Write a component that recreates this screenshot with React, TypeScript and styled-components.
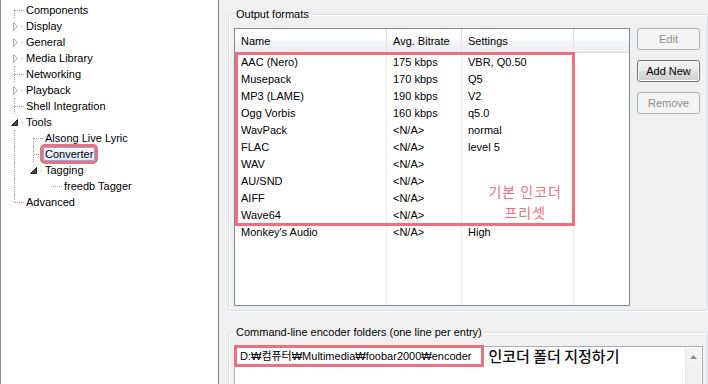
import styled, { createGlobalStyle } from "styled-components";

const GlobalStyle = createGlobalStyle`
  html, body {
    margin: 0;
    padding: 0;
  }
  body {
    font-family: "Liberation Sans", "Noto Sans CJK KR", sans-serif;
    font-size: 11px;
    color: #000;
    background: #f0f0f0;
  }
  * {
    box-sizing: border-box;
  }
`;

type TreeItem = {
  label: string;
  guides: boolean[];
  expander?: "open" | "closed";
  first?: boolean;
  last?: boolean;
  selected?: boolean;
};

const tree: TreeItem[] = [
  { label: "Components", guides: [], first: true },
  { label: "Display", guides: [], expander: "closed" },
  { label: "General", guides: [], expander: "closed" },
  { label: "Media Library", guides: [], expander: "closed" },
  { label: "Networking", guides: [] },
  { label: "Playback", guides: [], expander: "closed" },
  { label: "Shell Integration", guides: [] },
  { label: "Tools", guides: [], expander: "open" },
  { label: "Alsong Live Lyric", guides: [true], first: true },
  { label: "Converter", guides: [true], selected: true },
  { label: "Tagging", guides: [true], expander: "open", last: true },
  { label: "freedb Tagger", guides: [true, false], first: true, last: true },
  { label: "Advanced", guides: [], last: true },
];

type Format = { name: string; bitrate: string; settings: string };

const formats: Format[] = [
  { name: "AAC (Nero)", bitrate: "175 kbps", settings: "VBR, Q0.50" },
  { name: "Musepack", bitrate: "170 kbps", settings: "Q5" },
  { name: "MP3 (LAME)", bitrate: "190 kbps", settings: "V2" },
  { name: "Ogg Vorbis", bitrate: "160 kbps", settings: "q5.0" },
  { name: "WavPack", bitrate: "<N/A>", settings: "normal" },
  { name: "FLAC", bitrate: "<N/A>", settings: "level 5" },
  { name: "WAV", bitrate: "<N/A>", settings: "" },
  { name: "AU/SND", bitrate: "<N/A>", settings: "" },
  { name: "AIFF", bitrate: "<N/A>", settings: "" },
  { name: "Wave64", bitrate: "<N/A>", settings: "" },
  { name: "Monkey's Audio", bitrate: "<N/A>", settings: "High" },
];

const columns = [
  { title: "Name", width: 152 },
  { title: "Avg. Bitrate", width: 75 },
  { title: "Settings", width: 112 },
];

const Expander = ({ open }: { open: boolean }) => (
  <svg width="19" height="16" viewBox="0 0 19 16">
    {open ? (
      <path d="M12.5 5.5 L12.5 11.5 L6.5 11.5 Z" fill="#4a4a4a" stroke="#262626" />
    ) : (
      <path d="M8.5 4.5 L8.5 12.5 L12.5 8.5 Z" fill="#fff" stroke="#a6a6a6" />
    )}
  </svg>
);

const TreeView = () => (
  <TreePanel>
    {tree.map((item) => (
      <TreeRow key={item.label}>
        {item.guides.map((line, i) => (
          <Guide key={i} $line={line} />
        ))}
        <Connector
          $from={item.first ? 8 : 0}
          $to={item.last ? 8 : 16}
          $branch={!!item.expander}
        >
          {item.expander && <Expander open={item.expander === "open"} />}
        </Connector>
        <TreeLabel $selected={item.selected}>{item.label}</TreeLabel>
      </TreeRow>
    ))}
  </TreePanel>
);

const App = () => {
  return (
    <Root>
      <GlobalStyle />
      <TreeView />
      <Content>
        <Group>
          <Legend>Output formats</Legend>
          <GroupBody>
            <ListView>
              <Header>
                {columns.map((c) => (
                  <HeaderCell key={c.title} style={{ width: c.width }}>
                    {c.title}
                  </HeaderCell>
                ))}
                <HeaderFiller />
              </Header>
              <ListBody>
                {formats.map((f) => (
                  <Row key={f.name}>
                    <Cell style={{ width: columns[0].width }}>{f.name}</Cell>
                    <Cell style={{ width: columns[1].width }}>{f.bitrate}</Cell>
                    <Cell style={{ width: columns[2].width }}>{f.settings}</Cell>
                  </Row>
                ))}
              </ListBody>
              <PresetMark>
                <PresetNote>
                  기본 인코더
                  <br />
                  프리셋
                </PresetNote>
              </PresetMark>
            </ListView>
            <Buttons>
              <Button disabled>Edit</Button>
              <Button>Add New</Button>
              <Button disabled>Remove</Button>
            </Buttons>
          </GroupBody>
        </Group>
        <Group $gap>
          <Legend>Command-line encoder folders (one line per entry)</Legend>
          <FolderBox>
            <FolderLine>
              <PathMark>D:₩컴퓨터₩Multimedia₩foobar2000₩encoder</PathMark>
              <FolderNote>인코더 폴더 지정하기</FolderNote>
            </FolderLine>
            <ScrollBar>
              <ScrollUp>
                <svg width="7" height="4" viewBox="0 0 7 4">
                  <path d="M0 4 L3.5 0 L7 4 Z" fill="#8a8a8a" />
                </svg>
              </ScrollUp>
            </ScrollBar>
          </FolderBox>
        </Group>
      </Content>
    </Root>
  );
};

const Root = styled.div`
  display: flex;
  width: 708px;
  height: 384px;
  overflow: hidden;
  background: #f0f0f0;
`;

const TreePanel = styled.div`
  flex: none;
  width: 219px;
  height: 100%;
  background: #fff;
  border-left: 1px solid #828790;
  border-right: 1px solid #828790;
  padding: 2px 0 0 4px;
`;

const TreeRow = styled.div`
  display: flex;
  align-items: center;
  height: 16px;
`;

const Guide = styled.span<{ $line: boolean }>`
  position: relative;
  flex: none;
  width: 19px;
  height: 16px;
  &::before {
    content: "";
    display: ${(p) => (p.$line ? "block" : "none")};
    position: absolute;
    left: 9px;
    top: 0;
    bottom: 0;
    border-left: 1px dotted #a0a0a0;
  }
`;

const Connector = styled.span<{ $from: number; $to: number; $branch: boolean }>`
  position: relative;
  flex: none;
  display: flex;
  width: 19px;
  height: 16px;
  &::before {
    content: "";
    display: ${(p) => (p.$branch ? "none" : "block")};
    position: absolute;
    left: 9px;
    top: ${(p) => p.$from}px;
    height: ${(p) => p.$to - p.$from}px;
    border-left: 1px dotted #a0a0a0;
  }
  &::after {
    content: "";
    position: absolute;
    top: 8px;
    left: ${(p) => (p.$branch ? 17 : 10)}px;
    width: ${(p) => (p.$branch ? 1 : 9)}px;
    border-top: 1px dotted #a0a0a0;
  }
`;

const TreeLabel = styled.span<{ $selected?: boolean }>`
  padding: 0 1px;
  height: 14px;
  line-height: 12px;
  border: 1px solid ${(p) => (p.$selected ? "#84acdd" : "transparent")};
  border-radius: 2px;
  white-space: nowrap;
  background: ${(p) =>
    p.$selected ? "linear-gradient(#f2f8fe, #dcebfc)" : "transparent"};
  outline: ${(p) => (p.$selected ? "3px solid #ee6f7d" : "none")};
  outline-offset: 0;
`;

const Content = styled.div`
  flex: 1;
  display: flex;
  flex-direction: column;
  padding: 8px 0 0 9px;
`;

const Group = styled.fieldset<{ $gap?: boolean }>`
  margin: ${(p) => (p.$gap ? "15px 0 0" : "0")};
  padding: 8px 4px 4px 5px;
  min-width: 0;
  border: 1px solid #d5dfe5;
  border-radius: 3px;
  box-shadow: inset 1px 1px 0 #fff, 1px 1px 0 #fff;
`;

const Legend = styled.legend`
  padding: 0 2px;
  line-height: 12px;
  color: #000;
`;

const GroupBody = styled.div`
  display: flex;
  gap: 7px;
`;

const ListView = styled.div`
  position: relative;
  width: 396px;
  height: 278px;
  background: #fff;
  border: 1px solid #828790;
`;

const Header = styled.div`
  display: flex;
  height: 24px;
  background: linear-gradient(#ffffff 0%, #ffffff 45%, #f3f4f6 55%, #eff0f2 100%);
  border-bottom: 1px solid #d5d5d5;
`;

const HeaderCell = styled.div`
  display: flex;
  align-items: center;
  padding-left: 6px;
  border-right: 1px solid #e3e5e8;
  white-space: nowrap;
`;

const HeaderFiller = styled.div`
  flex: 1;
`;

const ListBody = styled.div`
  height: 252px;
  background-image: linear-gradient(#e8ecf1, #e8ecf1),
    linear-gradient(#e8ecf1, #e8ecf1), linear-gradient(#e8ecf1, #e8ecf1);
  background-size: 1px 100%;
  background-repeat: no-repeat;
  background-position: 151px 0, 226px 0, 338px 0;
`;

const Row = styled.div`
  display: flex;
  height: 17px;
  align-items: center;
`;

const Cell = styled.div`
  padding-left: 6px;
  white-space: nowrap;
`;

const PresetMark = styled.div`
  position: absolute;
  left: 0;
  top: 23px;
  width: 340px;
  height: 174px;
  border: 3px solid #ee6f7d;
`;

const PresetNote = styled.div`
  position: absolute;
  right: 10px;
  bottom: 0;
  font-family: "Noto Sans CJK KR", sans-serif;
  font-size: 14px;
  letter-spacing: 1px;
  line-height: 21px;
  text-align: center;
  color: #f0707f;
`;

const Buttons = styled.div`
  display: flex;
  flex-direction: column;
  gap: 10px;
`;

const Button = styled.button`
  width: 63px;
  height: 22px;
  padding: 0;
  font-family: inherit;
  font-size: 11px;
  color: #000;
  border: 1px solid #707070;
  border-radius: 3px;
  background: linear-gradient(#f2f2f2 0%, #ebebeb 50%, #dddddd 51%, #cfcfcf 100%);
  box-shadow: inset 0 0 0 1px #fcfcfc;
  &:disabled {
    color: #8d8d8d;
    border-color: #adb2b5;
    background: #f4f4f4;
    box-shadow: none;
  }
`;

const FolderBox = styled.div`
  display: flex;
  height: 60px;
  background: #fff;
  border: 1px solid #abadb3;
`;

const FolderLine = styled.div`
  flex: 1;
  display: flex;
  align-items: center;
  align-self: flex-start;
`;

const PathMark = styled.span`
  margin: -2px 0 0 -1px;
  padding: 0 9px 0 3px;
  height: 22px;
  line-height: 16px;
  font-size: 11px;
  border: 3px solid #ee6f7d;
  white-space: nowrap;
`;

const FolderNote = styled.span`
  margin: -2px 0 0 5px;
  font-family: "Noto Sans CJK KR", sans-serif;
  font-size: 15px;
  font-weight: 500;
  line-height: 18px;
  color: #111;
  white-space: nowrap;
`;

const ScrollBar = styled.div`
  flex: none;
  width: 16px;
  margin: 1px 1px 0 0;
  background: #f0f0f0;
  border-left: 1px solid #e6e6e6;
`;

const ScrollUp = styled.div`
  display: flex;
  align-items: center;
  justify-content: center;
  height: 17px;
  background: #f3f3f3;
`;

export default App;
